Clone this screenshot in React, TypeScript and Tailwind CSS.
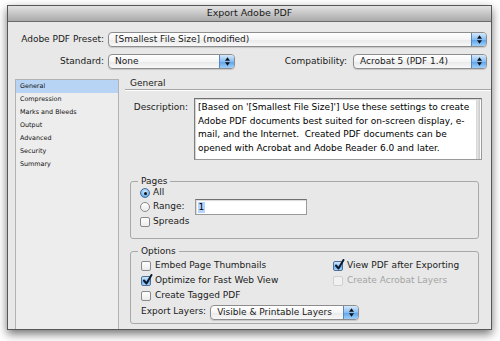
import React from "react";

function Stepper() {
  return (
    <div className="flex h-full w-[15px] shrink-0 items-center justify-center rounded-r-[3px] border-l border-[#5a86b5] bg-[linear-gradient(to_bottom,#d6e9fc,#86bdf3_50%,#5aa2ea_51%,#9fd0fa)]">
      <svg width="5" height="9" viewBox="0 0 6 10">
        <path d="M3 0 L6 4 H0 Z M0 6 H6 L3 10 Z" fill="#111" />
      </svg>
    </div>
  );
}

function Popup({ text, className }: { text: string; className: string }) {
  return (
    <div
      className={`flex h-[15px] items-stretch rounded-[4px] border border-[#8d8d8d] bg-[linear-gradient(to_bottom,#ffffff,#f5f5f5_50%,#e9e9e9_51%,#f8f8f8)] shadow-[0_1px_1px_rgba(0,0,0,0.15)] ${className}`}
    >
      <div className="flex flex-1 items-center overflow-hidden whitespace-nowrap pl-[6px] leading-none">
        {text}
      </div>
      <Stepper />
    </div>
  );
}

function Check({ checked, disabled }: { checked?: boolean; disabled?: boolean }) {
  return (
    <span
      className={`relative inline-block h-[10px] w-[10px] shrink-0 rounded-[2px] border ${
        disabled
          ? "border-[#cfcfcf] bg-[#f1f1f1]"
          : checked
          ? "border-[#4a6f98] bg-[linear-gradient(to_bottom,#d3e8fc,#8cc1f4_50%,#62a8ec_51%,#acd6fa)]"
          : "border-[#8a8a8a] bg-[linear-gradient(to_bottom,#ffffff,#ebebeb)]"
      }`}
    >
      {checked && (
        <svg className="absolute left-[0px] top-[-3px]" width="11" height="12" viewBox="0 0 11 12">
          <path
            d="M2 6.5 L4.5 9.5 L9.5 1"
            stroke="#0d1a30"
            strokeWidth="2"
            fill="none"
            strokeLinecap="round"
            strokeLinejoin="round"
          />
        </svg>
      )}
    </span>
  );
}

function Radio({ checked }: { checked?: boolean }) {
  return (
    <span
      className={`flex h-[10px] w-[10px] shrink-0 items-center justify-center rounded-full border ${
        checked
          ? "border-[#4a6f98] bg-[radial-gradient(circle_at_50%_35%,#d9ecfd,#6cb0ef_70%,#4d95df)]"
          : "border-[#8a8a8a] bg-[linear-gradient(to_bottom,#ffffff,#ececec)]"
      }`}
    >
      {checked && <span className="h-[3px] w-[3px] rounded-full bg-[#111]" />}
    </span>
  );
}

const sideItems = ["General", "Compression", "Marks and Bleeds", "Output", "Advanced", "Security", "Summary"];

export default function App() {
  return (
    <div className="h-[341px] w-[500px] overflow-hidden bg-white pl-[7px] pt-[5px] font-['DejaVu_Sans',sans-serif] text-[9px] text-[#1a1a1a]">
      <div className="flex h-[325px] w-[485px] flex-col border border-[#575757] bg-[#e8e8e8] shadow-[0_4px_9px_rgba(0,0,0,0.55)]">
        <div className="flex h-[16px] shrink-0 items-center justify-center border-b border-[#6b6b6b] bg-[linear-gradient(to_bottom,#e2e2e2,#aaaaaa)] text-[9.5px] text-[#1b1b1b]">
          Export Adobe PDF
        </div>

        <div className="mt-[10px] flex items-center pr-[4px]">
          <div className="w-[96px] text-right">Adobe PDF Preset:</div>
          <Popup className="ml-[4px] flex-1" text="[Smallest File Size] (modified)" />
        </div>

        <div className="mt-[7px] flex items-center pr-[4px]">
          <div className="w-[96px] text-right">Standard:</div>
          <Popup className="ml-[4px] w-[127px]" text="None" />
          <div className="ml-auto flex items-center gap-[6px]">
            <span>Compatibility:</span>
            <Popup className="w-[134px]" text="Acrobat 5 (PDF 1.4)" />
          </div>
        </div>

        <div className="mt-[10px] flex min-h-0 flex-1">
          <div className="ml-[7px] w-[104px] border-x border-t border-[#b3b3b3] bg-[#ededed]">
            {sideItems.map((s, i) => (
              <div
                key={s}
                className={`flex h-[13px] items-center pl-[4px] text-[6.4px] text-[#111] ${
                  i === 0 ? "bg-[#b8d4f5]" : ""
                }`}
              >
                {s}
              </div>
            ))}
          </div>

          <div className="ml-[6px] flex flex-1 flex-col">
            <div className="flex h-[10px] items-center pl-[5px]">General</div>
            <div className="h-[2px] border-t border-b border-t-[#a5a5a5] border-b-white" />

            <div className="mt-[7px] flex items-start pr-[9px]">
              <div className="w-[63px] pt-[3px] text-right leading-[13px]">Description:</div>
              <div className="ml-[6px] flex h-[62px] flex-1 border border-[#9a9a9a] border-t-[#707070] border-l-[#7d7d7d] bg-white shadow-[inset_1px_1px_1px_rgba(0,0,0,0.18)]">
                <div className="flex-1 whitespace-pre pl-[3px] pt-[2px] leading-[13.5px] text-black">
                  <div>[Based on '[Smallest File Size]'] Use these settings to create</div>
                  <div>Adobe PDF documents best suited for on-screen display, e-</div>
                  <div>mail, and the Internet.  Created PDF documents can be</div>
                  <div>opened with Acrobat and Adobe Reader 6.0 and later.</div>
                </div>
                <div className="mr-[1px] w-[4px] border-l border-[#d8d8d8] bg-[linear-gradient(to_right,#e8e8e8,#c8c8c8)]" />
              </div>
            </div>

            <fieldset className="ml-[5px] mr-[12px] mt-[16px] rounded-[3px] border border-[#a8a8a8]">
              <legend className="ml-[7px] px-[3px] leading-[11px]">Pages</legend>
              <div className="flex flex-col pb-[9px] pl-[9px]">
                <div className="flex h-[12px] items-center gap-[3px]">
                  <Radio checked />
                  <span>All</span>
                </div>
                <div className="flex h-[16px] items-center gap-[3px]">
                  <Radio />
                  <span>Range:</span>
                  <div className="ml-[7px] flex h-[16px] w-[112px] items-center border border-[#9a9a9a] border-t-[#707070] bg-white pl-[2px] shadow-[inset_1px_1px_1px_rgba(0,0,0,0.15)]">
                    <span className="bg-[#b5d5ff] px-[1px] leading-[11px] text-black">1</span>
                  </div>
                </div>
                <div className="flex h-[14px] items-center gap-[3px]">
                  <Check />
                  <span>Spreads</span>
                </div>
              </div>
            </fieldset>

            <fieldset className="ml-[5px] mr-[12px] mt-[7px] rounded-[3px] border border-[#a8a8a8]">
              <legend className="ml-[7px] px-[3px] leading-[11px]">Options</legend>
              <div className="pb-[3px] pl-[10px] pt-[2px]">
                <div className="grid grid-cols-[192px_auto] gap-y-[1px]">
                  <div className="flex h-[14px] items-center gap-[4px]">
                    <Check />
                    <span>Embed Page Thumbnails</span>
                  </div>
                  <div className="flex h-[14px] items-center gap-[4px]">
                    <Check checked />
                    <span>View PDF after Exporting</span>
                  </div>
                  <div className="flex h-[14px] items-center gap-[4px]">
                    <Check checked />
                    <span>Optimize for Fast Web View</span>
                  </div>
                  <div className="flex h-[14px] items-center gap-[4px]">
                    <Check disabled />
                    <span className="text-[#a4a4a4]">Create Acrobat Layers</span>
                  </div>
                  <div className="flex h-[14px] items-center gap-[4px]">
                    <Check />
                    <span>Create Tagged PDF</span>
                  </div>
                </div>
                <div className="mt-[1px] flex h-[16px] items-center gap-[4px]">
                  <span>Export Layers:</span>
                  <Popup className="w-[149px]" text="Visible & Printable Layers" />
                </div>
              </div>
            </fieldset>
          </div>
        </div>
      </div>
    </div>
  );
}
